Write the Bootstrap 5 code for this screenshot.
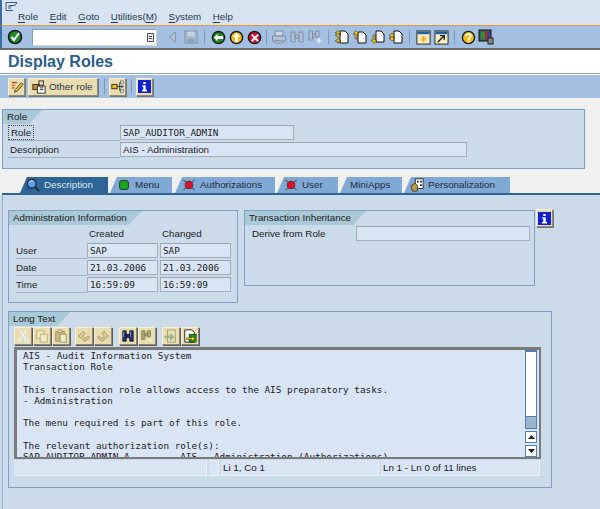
<!DOCTYPE html>
<html lang="en">
<head>
    <meta charset="UTF-8">
    <title>Display Roles</title>
    <link href="https://cdn.jsdelivr.net/npm/bootstrap@5.3.0/dist/css/bootstrap.min.css" rel="stylesheet">
    <style>
        html, body { width: 600px; height: 509px; overflow: hidden; }
        body { background: #cbdbea; color: #1c1c1c; font: 9.8px/1 "Liberation Sans", Arial, sans-serif; }
        svg { display: block; }
        .sap-shell { height: 509px; display: flex; flex-direction: column; }

        .sap-menu { height: 26px; background: #d9e4f2; border-left: 2px solid #3a6ea5; border-bottom: 1px solid #e2953a; padding: 2px 0 0 3px; }
        .sap-menu-icon { height: 9px; }
        .sap-menu-items { padding: 1px 0 0 13px; }
        .sap-menu-items span { margin-right: 11.5px; color: #26394f; }
        .sap-menu-items u { text-underline-offset: 2px; }
        .sap-bar { background: #a3c0e3; }
        .sap-bar-main { height: 24px; padding-left: 4px; border-left: 2px solid #3a6ea5; border-bottom: 2px solid #6d6d6d; }
        .sap-cmd { width: 125px; height: 17px; margin: 0 7px 0 8px; background: #fff; border: 1px solid #d5d5cf; border-top-color: #8d9bab; border-left-color: #8d9bab; padding-right: 2px; }
        .sap-slot { width: 18px; height: 18px; display: flex; align-items: center; justify-content: center; }
        .sap-sep { width: 1px; height: 14px; margin: 0 4px; background: #d8e2ee; border-left: 1px solid #7f96b2; }
        .sap-sep-n { margin: 0 3px; }
        .sap-title { height: 24px; background: #fff; color: #2a5d8f; font-size: 16px; font-weight: 700; padding-left: 8px; border-bottom: 1px solid #8ba6c4; }
        .sap-bar-app { height: 24px; padding-left: 8px; border-top: 1px solid #fff; }
        .sap-btn { height: 18px; width: 17px; background: #e9dcae; border: 1px solid #8a8a80; border-top-color: #f7f1d8; border-left-color: #f7f1d8; box-shadow: 1px 1px 0 #77776c; }
        .sap-btn-label { width: 70px; margin: 0 6px 0 3px; padding-left: 3px; gap: 3px; color: #26394f; white-space: nowrap; }
        .sap-sep-app { height: 15px; margin: 0 4px 0 0; }
        .sap-app-gap { margin-right: 5px; }

        .sap-top { background: #f0f0ee; padding: 11px 0 0 2px; }
        .sap-box { border: 1px solid #7f9fc4; background: #cbdbea; }
        .sap-role { width: 583px; height: 60px; box-shadow: 0 0 0 1px #e6edf5; }
        .sap-legend { height: 14px; background: #a9c8d8; color: #202020; padding: 2px 15px 0 4px; display: inline-block; line-height: 1; clip-path: polygon(0 0, 100% 0, calc(100% - 13px) 100%, 0 100%); }
        .sap-legend-wrap { line-height: 0; }
        .sap-field-row { display: flex; align-items: center; height: 17px; padding-left: 4px; }
        .sap-field-line { border-bottom: 1px solid #9fb0c2; width: 113px; height: 16px; padding: 3px 0 0 3px; }
        .sap-focus { border: 1px dotted #444; padding: 1px 2px; margin-left: -2px; }
        .sap-input { height: 15px; background: #d9e5f4; border: 1px solid #a6afb8; border-top-color: #9aa5b0; padding: 2px 0 0 2px; white-space: pre; }
        .sap-mono { font: 9.33px/1 "DejaVu Sans Mono", "Liberation Mono", monospace; }
        .w-role { width: 174px; }
        .w-desc { width: 347px; }

        .sap-tabs { height: 18px; margin-top: 8px; padding-left: 18px; gap: 2px; border-bottom: 2px solid #2f6496; }
        .sap-tab { height: 16px; background: #80a9d6; color: #1f2d3d; display: flex; align-items: center; gap: 4px; clip-path: polygon(7px 0, 100% 0, 100% 100%, 0 100%); }
        .sap-tab-on { background: #2f6496; color: #dbe6f2; }
        .t-desc { width: 88px; padding-left: 6px; }
        .t-menu { width: 62px; margin-right: 1px; padding-left: 7px; }
        .t-auth { width: 100px; padding-left: 7px; }
        .t-user { width: 61px; padding-left: 7px; }
        .t-mini { width: 62px; padding-left: 10px; }
        .t-pers { width: 106px; padding-left: 6px; }

        .sap-panel { flex: 1; margin-left: 2px; border-left: 1px solid #8fadd0; padding: 15px 0 0 5px; }
        .sap-admin { width: 230px; height: 93px; }
        .sap-inherit { width: 291px; height: 76px; margin-left: 6px; }
        .sap-head { height: 18px; padding: 4px 0 0 80px; }
        .sap-head span { width: 73px; }
        .sap-grid-row { display: flex; height: 17px; padding-left: 7px; }
        .sap-grid-label { width: 71px; padding: 3px 0 0 0; height: 16px; border-bottom: 1px solid #9fb0c2; }
        .w-date { width: 71px; margin-right: 2px; height: 15px; }
        .sap-derive { padding: 1px 0 0 7px; }
        .sap-derive > span { width: 104px; }
        .w-derive { width: 174px; }
        .sap-info-side { margin: -1px 0 0 1px; }

        .sap-long { width: 544px; height: 177px; margin-top: 8px; }
        .sap-long-tools { padding: 1px 0 0 5px; gap: 1px; height: 21px; }
        .sap-long-tools .sap-btn { width: 18px; box-shadow: 1px 1px 0 #5c5c5c; }
        .sap-gap-a { margin-right: 4px; }
        .sap-gap-b { margin-right: 6px; }
        .sap-gap-c { margin-right: 5px; }
        .sap-editor { width: 527px; height: 112px; margin-left: 5px; background: #d9e5f4; border: 1px solid #7a7a7a; border-width: 3px 2px 2px 3px; }
        .sap-text { flex: 1; margin: 0; padding: 0 0 0 6px; font: 9.33px/11.2px "DejaVu Sans Mono", "Liberation Mono", monospace; color: #1c1c1c; overflow: hidden; white-space: pre; }
        .sap-scroll { width: 12px; margin-right: 2px; }
        .sap-track { height: 79px; background: #fff; border: 1px solid #4f7fb5; border-width: 2px 1px 0 1px; display: flex; flex-direction: column; justify-content: flex-end; }
        .sap-thumb { height: 13px; background: #9ab5cc; border: 1px solid #4f7fb5; margin: 0 -1px; }
        .sap-arrow { height: 12px; margin-top: 2px; background: #fff; border: 1px solid #4f7fb5; }
        .sap-status { margin: 1px 0 0 5px; gap: 2px; height: 17px; }
        .sap-status div { height: 16px; background: #d9e5f4; border-right: 1px solid #edf2f8; border-bottom: 1px solid #edf2f8; padding: 3px 0 0 2px; }
        .s-a { width: 193px; }
        .s-b { width: 10px; }
        .s-c { width: 158px; }
        .s-d { width: 159px; }
    </style>
</head>
<body>
    <svg width="0" height="0" class="d-none">
        <defs>
            <symbol id="i-ok" viewBox="0 0 16 16"><circle cx="8" cy="8" r="6.5" fill="#1d8a2c" stroke="#1a1a1a" stroke-width="1.6"/><path d="M4.5 8l2.5 3 5-7" fill="none" stroke="#fff" stroke-width="2"/></symbol>
            <symbol id="i-back" viewBox="0 0 16 16"><circle cx="8" cy="8" r="6.5" fill="#1d8a2c" stroke="#1a1a1a" stroke-width="1.6"/><path d="M3 8l4-4v2.500h6v3H7V12z" fill="#fff"/></symbol>
            <symbol id="i-up" viewBox="0 0 16 16"><circle cx="8" cy="8" r="6.500" fill="#f2bf16" stroke="#1a1a1a" stroke-width="1.6"/><path d="M8 3l4 4.500H9.500V13h-3V7.500H4z" fill="#fff"/></symbol>
            <symbol id="i-stop" viewBox="0 0 16 16"><circle cx="8" cy="8" r="6.500" fill="#d3122a" stroke="#1a1a1a" stroke-width="1.6"/><path d="M5 5l7 7M12 5l-7 7" stroke="#fff" stroke-width="2"/></symbol>
            <symbol id="i-left" viewBox="0 0 16 16"><path d="M11 2v12L4 8z" fill="#b9c5d2" stroke="#7d8b9a"/></symbol>
            <symbol id="i-save" viewBox="0 0 16 16"><rect x="2" y="2" width="12" height="12" fill="#a9bbcf" stroke="#7d8ea2"/><rect x="4.500" y="2.500" width="7" height="4.500" fill="#c6d4e3"/><rect x="4.500" y="9.500" width="7" height="4" fill="#8ea3b9"/></symbol>
            <symbol id="i-print" viewBox="0 0 16 16"><path d="M4 2h8v5H4z" fill="#cbd7e5" stroke="#7d8ea2"/><path d="M1.500 7h13v5h-13z" fill="#b0c1d4" stroke="#7d8ea2"/><path d="M4 12h8v2H4z" fill="#cbd7e5" stroke="#7d8ea2"/></symbol>
            <symbol id="i-find" viewBox="0 0 16 16"><path d="M2 3h4v10H2zM10 3h4v10h-4zM6 6h4v3H6z" fill="#b0c1d4" stroke="#7d8ea2"/></symbol>
            <symbol id="i-findp" viewBox="0 0 16 16"><path d="M2 2h3.500v9H2zM8.500 2H12v6H8.500zM5.500 5h3v3h-3z" fill="#b0c1d4" stroke="#7d8ea2"/><path d="M12 9v5M9.500 11.500h5" stroke="#dfe7f0" stroke-width="2"/></symbol>
            <symbol id="i-pg1" viewBox="0 0 16 16"><path d="M6 2h5l3 3v9H6z" fill="#fff" stroke="#111"/><path d="M4 1.500L7 4H5v2h2L4 8.500 1 6h2V4H1zM4 9.500L7 12H5v2H3v-2H1z" fill="#f0c010" stroke="#222" stroke-width=".5"/></symbol>
            <symbol id="i-pg2" viewBox="0 0 16 16"><path d="M6 3h5l3 3v8H6z" fill="#fff" stroke="#111"/><path d="M4 1.500L7 5H5v5H3V5H1z" fill="#f0c010" stroke="#222" stroke-width=".5"/></symbol>
            <symbol id="i-pg3" viewBox="0 0 16 16"><path d="M6 2h5l3 3v8H6z" fill="#fff" stroke="#111"/><path d="M4 14.500L7 11H5V6H3v5H1z" fill="#f0c010" stroke="#222" stroke-width=".5"/></symbol>
            <symbol id="i-pg4" viewBox="0 0 16 16"><path d="M6 2h5l3 3v9H6z" fill="#fff" stroke="#111"/><path d="M4 4L7 7H5v2h2l-3 3-3-3h2V7H1z" fill="#f0c010" stroke="#222" stroke-width=".5"/></symbol>
            <symbol id="i-win1" viewBox="0 0 16 16"><rect x="1" y="1" width="14" height="14" fill="#f5efc4" stroke="#222"/><rect x="1.500" y="1.500" width="13" height="3" fill="#2a5d9f"/><path d="M8 6v7M4.500 9.500h7M5.500 7l5 5M10.500 7l-5 5" stroke="#e0a810"/></symbol>
            <symbol id="i-win2" viewBox="0 0 16 16"><rect x="1" y="1" width="14" height="14" fill="#f5efc4" stroke="#222"/><rect x="1.500" y="1.500" width="13" height="3" fill="#2a5d9f"/><path d="M4 13l6-6M6.500 6H11v4.500" fill="none" stroke="#222" stroke-width="1.500"/></symbol>
            <symbol id="i-help" viewBox="0 0 16 16"><circle cx="8" cy="8" r="6.500" fill="#f2bf16" stroke="#1a1a1a" stroke-width="1.500"/><path d="M5.500 6.500C5.500 3.500 10.500 3.500 10.500 6.500 10.500 8.500 8 8 8 10.500" fill="none" stroke="#fff" stroke-width="1.800"/><circle cx="8" cy="12.300" r="1.100" fill="#fff"/></symbol>
            <symbol id="i-layout" viewBox="0 0 16 16"><rect x="1" y="1" width="12" height="11" fill="#555" stroke="#111"/><rect x="3" y="3" width="4" height="7" fill="#1d9a34"/><rect x="7" y="3" width="2.500" height="7" fill="#d3122a"/><rect x="9.500" y="3" width="2" height="7" fill="#2040c0"/><rect x="10" y="9" width="5" height="6" fill="#8a8a8a" stroke="#222"/></symbol>
            <symbol id="i-edit" viewBox="0 0 16 16"><path d="M2 3h6M2 6h4M2 9h3" stroke="#c04020" stroke-width="1.200"/><path d="M5 14l1-3 7-8 2 2-7 8z" fill="#e8b820" stroke="#222" stroke-width=".8"/></symbol>
            <symbol id="i-other" viewBox="0 0 16 16"><rect x="1" y="5" width="7" height="6" fill="#d98a1e" stroke="#222"/><rect x="6" y="7" width="9" height="8" fill="#fff" stroke="#222"/><rect x="8" y="1" width="5" height="5" fill="none" stroke="#222"/><path d="M9 9h4M9 11h4" stroke="#222"/></symbol>
            <symbol id="i-tree" viewBox="0 0 16 16"><rect x="1" y="5" width="6" height="5" fill="#f0c010" stroke="#222"/><path d="M7 7.500h6M10 3v9M10 3h3M10 12h3" stroke="#222" fill="none"/><path d="M12 5.500l3 2-3 2z" fill="#2a5d9f"/><rect x="11" y="1" width="3" height="3" fill="#cfd8e3" stroke="#555" stroke-width=".6"/><rect x="11" y="11" width="3" height="3" fill="#cfd8e3" stroke="#555" stroke-width=".6"/></symbol>
            <symbol id="i-info" viewBox="0 0 16 16"><rect width="16" height="16" fill="#1022d0"/><path d="M6.500 2.500h3v2.500h-3zM5.500 6.500h4V12h1.500v2H5v-2h1.500V8.500h-1z" fill="#fff"/></symbol>
            <symbol id="i-glass" viewBox="0 0 16 16"><path d="M10 10l5 5" stroke="#223" stroke-width="2"/><circle cx="6.500" cy="6.500" r="5" fill="#5aa0e8" stroke="#223" stroke-width="1.300"/><path d="M4 5c1-2 3-2 4-1" stroke="#fff" fill="none"/></symbol>
            <symbol id="i-green" viewBox="0 0 16 16"><rect x="3" y="3" width="10" height="10" rx="2" fill="#18a81c" stroke="#222"/></symbol>
            <symbol id="i-red" viewBox="0 0 16 16"><path d="M1.500 2l3 3M14.500 2l-3 3M1.500 14l3-3M14.500 14l-3-3" stroke="#222"/><circle cx="8" cy="8" r="4.500" fill="#e0102a" stroke="#333" stroke-width=".8"/></symbol>
            <symbol id="i-pers" viewBox="0 0 16 16"><rect x="6" y="1" width="9" height="11" fill="#fff" stroke="#222"/><path d="M8 3h2v2H8zM11.500 3h2v2h-2zM11.500 7h2v2h-2z" fill="#222"/><path d="M1 9l5-3 3 3-1 6H3z" fill="#b89a3c" stroke="#222" stroke-width=".8"/></symbol>
            <symbol id="i-cut" viewBox="0 0 16 16"><path d="M4 1l7 10M12 1L5 11" stroke="#e6f0f8" stroke-width="1.800"/><circle cx="4" cy="13" r="2" fill="none" stroke="#e6f0f8" stroke-width="1.500"/><circle cx="12" cy="13" r="2" fill="none" stroke="#e6f0f8" stroke-width="1.500"/></symbol>
            <symbol id="i-copy" viewBox="0 0 16 16"><path d="M2 2h8v9H2z" fill="#f2eac4" stroke="#b3a874"/><path d="M6 6h8v9H6z" fill="#f2eac4" stroke="#b3a874"/></symbol>
            <symbol id="i-paste" viewBox="0 0 16 16"><path d="M2 3h10v11H2z" fill="#c8bb86" stroke="#9a8f63"/><path d="M7 6h7v9H7z" fill="#f2eac4" stroke="#9a8f63"/><path d="M5 1h4v3H5z" fill="#e8dfb0" stroke="#9a8f63"/></symbol>
            <symbol id="i-undo" viewBox="0 0 16 16"><path d="M2 8l5-5 2 2-3 3 3 3 4-3 1 2-5 4z" fill="none" stroke="#b3a874" stroke-width="1.300"/></symbol>
            <symbol id="i-redo" viewBox="0 0 16 16"><path d="M14 8L9 3 7 5l3 3-3 3-4-3-1 2 5 4z" fill="none" stroke="#b3a874" stroke-width="1.300"/></symbol>
            <symbol id="i-bino" viewBox="0 0 16 16"><path d="M2 2h4v12H2zM10 2h4v12h-4zM6 6h4v4H6z" fill="#1f2f80" stroke="#111" stroke-width=".8"/><path d="M3 3v6M11 3v6" stroke="#8aa0e0"/></symbol>
            <symbol id="i-binop" viewBox="0 0 16 16"><path d="M2 2h3.500v10H2zM8.500 2H12v7H8.500zM5.500 5h3v3h-3z" fill="#a8a278" stroke="#8a8560"/><path d="M12 10v5M9.500 12.500h5" stroke="#f2eac4" stroke-width="2"/></symbol>
            <symbol id="i-imp" viewBox="0 0 16 16"><path d="M4 1h9v14H4z" fill="#e8e0b8" stroke="#a39a6e"/><path d="M1 8h6V5l5 4-5 4v-3H1z" fill="#8fc08f" stroke="#a39a6e" stroke-width=".5"/></symbol>
            <symbol id="i-exp" viewBox="0 0 16 16"><path d="M2 1h8l3 3v11H2z" fill="#fff" stroke="#111"/><rect x="7" y="6" width="8" height="9" fill="#14a01c" stroke="#111" stroke-width=".7"/><path d="M4 10h6V8l4 3-4 3v-2H4z" fill="#f5d010" stroke="#111" stroke-width=".5"/></symbol>
        </defs>
    </svg>

    <div class="sap-shell">
        <div class="sap-menu">
            <svg class="sap-menu-icon" width="13" height="9" viewBox="0 0 13 9"><path d="M1 .5h11l-2 3H5M1 .5v8h7M3 4h4M3 6h3" fill="none" stroke="#3a5f8a"/></svg>
            <div class="sap-menu-items d-flex">
                <span><u>R</u>ole</span><span><u>E</u>dit</span><span><u>G</u>oto</span><span><u>U</u>tilities(<u>M</u>)</span><span><u>S</u>ystem</span><span><u>H</u>elp</span>
            </div>
        </div>

        <div class="sap-bar sap-bar-main d-flex align-items-center">
            <div class="sap-slot"><svg width="16" height="16"><use href="#i-ok"/></svg></div>
            <div class="sap-cmd d-flex align-items-center justify-content-end">
                <svg width="7" height="9" viewBox="0 0 7 9"><path d="M.5.5h6v8h-6zM2 3.500h3M2 5.500h3" fill="#dfe3e8" stroke="#555"/></svg>
            </div>
            <div class="sap-slot"><svg width="14" height="14"><use href="#i-left"/></svg></div>
            <div class="sap-slot"><svg width="16" height="16"><use href="#i-save"/></svg></div>
            <div class="sap-sep"></div>
            <div class="sap-slot"><svg width="15" height="15"><use href="#i-back"/></svg></div>
            <div class="sap-slot"><svg width="15" height="15"><use href="#i-up"/></svg></div>
            <div class="sap-slot"><svg width="15" height="15"><use href="#i-stop"/></svg></div>
            <div class="sap-sep sap-sep-n"></div>
            <div class="sap-slot"><svg width="16" height="16"><use href="#i-print"/></svg></div>
            <div class="sap-slot"><svg width="16" height="16"><use href="#i-find"/></svg></div>
            <div class="sap-slot"><svg width="16" height="16"><use href="#i-findp"/></svg></div>
            <div class="sap-sep"></div>
            <div class="sap-slot"><svg width="16" height="16"><use href="#i-pg1"/></svg></div>
            <div class="sap-slot"><svg width="16" height="16"><use href="#i-pg2"/></svg></div>
            <div class="sap-slot"><svg width="16" height="16"><use href="#i-pg3"/></svg></div>
            <div class="sap-slot"><svg width="16" height="16"><use href="#i-pg4"/></svg></div>
            <div class="sap-sep"></div>
            <div class="sap-slot"><svg width="15" height="15"><use href="#i-win1"/></svg></div>
            <div class="sap-slot"><svg width="15" height="15"><use href="#i-win2"/></svg></div>
            <div class="sap-sep"></div>
            <div class="sap-slot"><svg width="15" height="15"><use href="#i-help"/></svg></div>
            <div class="sap-slot"><svg width="16" height="16"><use href="#i-layout"/></svg></div>
        </div>

        <div class="sap-title d-flex align-items-center">Display Roles</div>

        <div class="sap-bar sap-bar-app d-flex align-items-center">
            <div class="sap-btn d-flex align-items-center justify-content-center"><svg width="14" height="14"><use href="#i-edit"/></svg></div>
            <div class="sap-btn sap-btn-label d-flex align-items-center"><svg width="14" height="14"><use href="#i-other"/></svg>Other role</div>
            <div class="sap-sep sap-sep-app"></div>
            <div class="sap-btn sap-app-gap d-flex align-items-center justify-content-center"><svg width="14" height="14"><use href="#i-tree"/></svg></div>
            <div class="sap-sep sap-sep-app"></div>
            <div class="sap-btn d-flex align-items-center justify-content-center"><svg width="13" height="13"><use href="#i-info"/></svg></div>
        </div>

        <div class="sap-top">
            <div class="sap-box sap-role">
                <div class="sap-legend-wrap"><span class="sap-legend">Role</span></div>
                <div class="sap-field-row">
                    <div class="sap-field-line"><span class="sap-focus">Role</span></div>
                    <div class="sap-input sap-mono w-role">SAP_AUDITOR_ADMIN</div>
                </div>
                <div class="sap-field-row">
                    <div class="sap-field-line">Description</div>
                    <div class="sap-input w-desc">AIS - Administration</div>
                </div>
            </div>
            <div class="sap-tabs d-flex">
                <div class="sap-tab sap-tab-on t-desc"><svg width="14" height="14"><use href="#i-glass"/></svg>Description</div>
                <div class="sap-tab t-menu"><svg width="14" height="14"><use href="#i-green"/></svg>Menu</div>
                <div class="sap-tab t-auth"><svg width="14" height="14"><use href="#i-red"/></svg>Authorizations</div>
                <div class="sap-tab t-user"><svg width="14" height="14"><use href="#i-red"/></svg>User</div>
                <div class="sap-tab t-mini">MiniApps</div>
                <div class="sap-tab t-pers"><svg width="14" height="14"><use href="#i-pers"/></svg>Personalization</div>
            </div>
        </div>

        <div class="sap-panel">
            <div class="d-flex align-items-start">
                <div class="sap-box sap-admin">
                    <div class="sap-legend-wrap"><span class="sap-legend">Administration Information</span></div>
                    <div class="sap-head d-flex"><span>Created</span><span>Changed</span></div>
                    <div class="sap-grid-row"><div class="sap-grid-label">User</div><div class="sap-input sap-mono w-date">SAP</div><div class="sap-input sap-mono w-date">SAP</div></div>
                    <div class="sap-grid-row"><div class="sap-grid-label">Date</div><div class="sap-input sap-mono w-date">21.03.2006</div><div class="sap-input sap-mono w-date">21.03.2006</div></div>
                    <div class="sap-grid-row"><div class="sap-grid-label">Time</div><div class="sap-input sap-mono w-date">16:59:09</div><div class="sap-input sap-mono w-date">16:59:09</div></div>
                </div>
                <div class="sap-box sap-inherit">
                    <div class="sap-legend-wrap"><span class="sap-legend">Transaction Inheritance</span></div>
                    <div class="sap-derive d-flex align-items-center"><span>Derive from Role</span><div class="sap-input w-derive"></div></div>
                </div>
                <div class="sap-btn sap-info-side d-flex align-items-center justify-content-center"><svg width="13" height="13"><use href="#i-info"/></svg></div>
            </div>

            <div class="sap-box sap-long">
                <div class="sap-legend-wrap"><span class="sap-legend">Long Text</span></div>
                <div class="sap-long-tools d-flex">
                    <div class="sap-btn d-flex align-items-center justify-content-center"><svg width="14" height="14"><use href="#i-cut"/></svg></div>
                    <div class="sap-btn d-flex align-items-center justify-content-center"><svg width="14" height="14"><use href="#i-copy"/></svg></div>
                    <div class="sap-btn sap-gap-a d-flex align-items-center justify-content-center"><svg width="14" height="14"><use href="#i-paste"/></svg></div>
                    <div class="sap-btn d-flex align-items-center justify-content-center"><svg width="14" height="14"><use href="#i-undo"/></svg></div>
                    <div class="sap-btn sap-gap-b d-flex align-items-center justify-content-center"><svg width="14" height="14"><use href="#i-redo"/></svg></div>
                    <div class="sap-btn d-flex align-items-center justify-content-center"><svg width="14" height="14"><use href="#i-bino"/></svg></div>
                    <div class="sap-btn sap-gap-c d-flex align-items-center justify-content-center"><svg width="14" height="14"><use href="#i-binop"/></svg></div>
                    <div class="sap-btn d-flex align-items-center justify-content-center"><svg width="14" height="14"><use href="#i-imp"/></svg></div>
                    <div class="sap-btn d-flex align-items-center justify-content-center"><svg width="14" height="14"><use href="#i-exp"/></svg></div>
                </div>
                <div class="sap-editor d-flex">
<pre class="sap-text">AIS - Audit Information System
Transaction Role

This transaction role allows access to the AIS preparatory tasks.
- Administration

The menu required is part of this role.

The relevant authorization role(s):
SAP_AUDITOR_ADMIN_A         AIS - Administration (Authorizations)</pre>
                    <div class="sap-scroll">
                        <div class="sap-track"><div class="sap-thumb"></div></div>
                        <div class="sap-arrow d-flex align-items-center justify-content-center"><svg width="7" height="4" viewBox="0 0 7 4"><path d="M3.500 0L7 4H0z" fill="#222"/></svg></div>
                        <div class="sap-arrow d-flex align-items-center justify-content-center"><svg width="7" height="4" viewBox="0 0 7 4"><path d="M3.500 4L7 0H0z" fill="#222"/></svg></div>
                    </div>
                </div>
                <div class="sap-status d-flex">
                    <div class="s-a"></div><div class="s-b"></div><div class="s-c">Li 1, Co 1</div><div class="s-d">Ln 1 - Ln 0 of 11 lines</div>
                </div>
            </div>
        </div>
    </div>
    <script src="https://cdn.jsdelivr.net/npm/bootstrap@5.3.0/dist/js/bootstrap.bundle.min.js"></script>
</body>
</html>
